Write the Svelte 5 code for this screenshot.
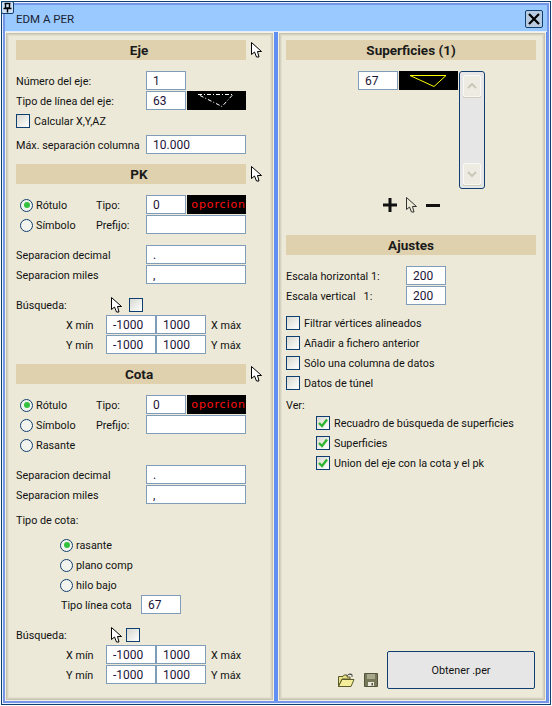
<script>
  const ajustes = [
    "Filtrar vértices alineados",
    "Añadir a fichero anterior",
    "Sólo una columna de datos",
    "Datos de túnel"
  ];
  const ver = [
    "Recuadro de búsqueda de superficies",
    "Superficies",
    "Union del eje con la cota y el pk"
  ];
</script>

{#snippet cursor()}
  <svg class="cursor" width="11" height="16" viewBox="0 0 11 16">
    <path d="M0.5 0.5V12.5L3.5 10L5.5 15H8L6.5 9.5H10.5Z" fill="#fff" stroke="#000" />
  </svg>
{/snippet}

{#snippet radio(label, on)}
  <span class="radio" class:on></span><span class="radioLabel">{label}</span>
{/snippet}

{#snippet check(label, on)}
  <div class="checkRow">
    <span class="check">
      {#if on}
        <svg width="12" height="12" viewBox="0 0 12 12">
          <path d="M2 6L5 9L10 2.5" fill="none" stroke="#2fb52f" stroke-width="2.4" />
        </svg>
      {/if}
    </span>
    <span>{label}</span>
  </div>
{/snippet}

{#snippet strip()}
  <div class="strip red"><span>r oporcion</span></div>
{/snippet}

{#snippet separators()}
  <div class="row"><label class="l130">Separacion decimal</label><input class="w100" readonly value="." /></div>
  <div class="row"><label class="l130">Separacion miles</label><input class="w100" readonly value="," /></div>
{/snippet}

{#snippet limits()}
  <div class="row limit">
    <label class="l40">X mín</label><input class="w50" readonly value="-1000" /><input class="w50" readonly value="1000" /><span class="after">X máx</span>
  </div>
  <div class="row limit">
    <label class="l40">Y mín</label><input class="w50" readonly value="-1000" /><input class="w50" readonly value="1000" /><span class="after">Y máx</span>
  </div>
{/snippet}

{#snippet heading(title)}
  <div class="headWrap">
    <h2 class="offset">{title}</h2>
    {@render cursor()}
  </div>
{/snippet}

<div class="window">
  <div class="frame">
    <span class="pin">
      <svg width="11" height="11" viewBox="0 0 11 11">
        <path d="M2.5 1.5H8.5M3.5 2V6H7.5V2M1.5 6.5H9.5M5.5 7V10.5" fill="none" stroke="#000" stroke-width="1.4" />
      </svg>
    </span>
    <header class="title">
      <span>EDM A PER</span>
      <button class="close" aria-label="Cerrar">
        <svg width="14" height="14" viewBox="0 0 14 14">
          <path d="M2 2L12 12M12 2L2 12" stroke="#000" stroke-width="2.2" />
        </svg>
      </button>
    </header>

    <div class="body">
      <section class="panel left">
        {@render heading("Eje")}
        <div class="row mt11"><label class="l130">Número del eje:</label><input class="w40" readonly value="1" /></div>
        <div class="row">
          <label class="l130">Tipo de línea del eje:</label><input class="w40" readonly value="63" />
          <div class="strip">
            <svg width="59" height="19" viewBox="0 0 59 19">
              <path d="M11 3.5H46L35 15.5Z" fill="none" stroke="#fff" stroke-dasharray="4 2 1 2" />
            </svg>
          </div>
        </div>
        <div class="row">{@render check("Calcular X,Y,AZ", false)}</div>
        <div class="row mt4"><label class="l130">Máx. separación columna</label><input class="w100" readonly value="10.000" /></div>

        <div class="mt9">{@render heading("PK")}</div>
        <div class="row mt11 indent">
          {@render radio("Rótulo", true)}<label class="tipo">Tipo:</label><input class="w40" readonly value="0" />{@render strip()}
        </div>
        <div class="row indent">
          {@render radio("Símbolo", false)}<label class="tipo">Prefijo:</label><input class="w100" readonly value="" />
        </div>
        <div class="mt10">{@render separators()}</div>
        <div class="row search mt10">
          <label class="l95">Búsqueda:</label>{@render cursor()}<span class="check wide"></span>
        </div>
        {@render limits()}

        <div class="mt9">{@render heading("Cota")}</div>
        <div class="row mt11 indent">
          {@render radio("Rótulo", true)}<label class="tipo">Tipo:</label><input class="w40" readonly value="0" />{@render strip()}
        </div>
        <div class="row indent">
          {@render radio("Símbolo", false)}<label class="tipo">Prefijo:</label><input class="w100" readonly value="" />
        </div>
        <div class="row indent">{@render radio("Rasante", false)}</div>
        <div class="mt10">{@render separators()}</div>
        <div class="row mt5">Tipo de cota:</div>
        <div class="row mt5 indent2">{@render radio("rasante", true)}</div>
        <div class="row indent2">{@render radio("plano comp", false)}</div>
        <div class="row indent2">{@render radio("hilo bajo", false)}</div>
        <div class="row tipoCota"><label class="l80">Tipo línea cota</label><input class="w40" readonly value="67" /></div>
        <div class="row search mt10">
          <label class="l95">Búsqueda:</label>{@render cursor()}<span class="check"></span>
        </div>
        {@render limits()}
      </section>

      <section class="panel right">
        <h2>Superficies (1)</h2>
        <div class="list">
          <input class="w40" readonly value="67" />
          <div class="strip">
            <svg width="59" height="19" viewBox="0 0 59 19">
              <path d="M11 4.5H47L35 15.5Z" fill="none" stroke="#ff0" />
            </svg>
          </div>
          <div class="scroll">
            <span class="arrow">
              <svg width="10" height="6" viewBox="0 0 10 6"><path d="M1 5L5 1L9 5" fill="none" stroke="#c9c7b8" stroke-width="2" /></svg>
            </span>
            <span class="arrow">
              <svg width="10" height="6" viewBox="0 0 10 6"><path d="M1 1L5 5L9 1" fill="none" stroke="#c9c7b8" stroke-width="2" /></svg>
            </span>
          </div>
        </div>
        <div class="tools">
          <svg width="14" height="14" viewBox="0 0 14 14"><path d="M7 0V14M0 7H14" stroke="#111" stroke-width="3" /></svg>
          <svg width="11" height="16" viewBox="0 0 11 16">
            <path d="M0.5 0.5V12.5L3.5 10L5.5 15H8L6.5 9.5H10.5Z" fill="#ece9d8" stroke="#333" />
          </svg>
          <svg width="14" height="3" viewBox="0 0 14 3"><path d="M0 1.5H14" stroke="#111" stroke-width="3" /></svg>
        </div>

        <h2 class="mt21">Ajustes</h2>
        <div class="row mt11"><label class="l120">Escala horizontal 1:</label><input class="w40" readonly value="200" /></div>
        <div class="row"><label class="l120">Escala vertical &nbsp;&nbsp;1:</label><input class="w40" readonly value="200" /></div>
        <div class="mt7">
          {#each ajustes as item}
            <div class="row">{@render check(item, false)}</div>
          {/each}
        </div>
        <div class="verLabel">Ver:</div>
        <div class="verList">
          {#each ver as item}
            <div class="row">{@render check(item, true)}</div>
          {/each}
        </div>

        <div class="footer">
          <svg class="fileIcon" width="17" height="14" viewBox="0 0 17 14">
            <path d="M0.5 3.5H5L6 2H9V4H12V6H4L0.5 13.5Z" fill="#e9e28a" stroke="#5b5b2a" />
            <path d="M4 6.5H16L13 13.5H0.5Z" fill="#f4ee9c" stroke="#5b5b2a" />
            <path d="M9 3C10 1 12 0.5 14 1.5M14 1.5V4M14 1.5H11.5" fill="none" stroke="#4a4a4a" />
          </svg>
          <svg class="fileIcon save" width="14" height="14" viewBox="0 0 14 14">
            <path d="M0.5 0.5H13.5V13.5H0.5Z" fill="#77775a" stroke="#55553c" />
            <path d="M3 1H11V6H3Z" fill="#a8a88c" />
            <path d="M4 9H10V13H4Z" fill="#e8e8dc" />
            <path d="M7.5 10H9V12.5H7.5Z" fill="#55553c" />
          </svg>
          <button class="go">Obtener .per</button>
        </div>
      </section>
    </div>
  </div>
</div>

<style>
  :global(body) {
    background: #fff;
  }

  .window {
    box-sizing: border-box;
    width: 550px;
    height: 704px;
    margin: 1px;
    border: 1px solid #0f3f70;
    padding: 1px;
    background: #e9f0fb;
    font-family: Roboto, "Liberation Sans", sans-serif;
    font-size: 10.8px;
    color: #111;
  }

  .frame {
    position: relative;
    box-sizing: border-box;
    height: 100%;
    border: 2px solid #7595e6;
    background: #99c9ff;
    display: flex;
    flex-direction: column;
  }

  .pin {
    position: absolute;
    left: -4px;
    top: -4px;
    width: 11px;
    height: 11px;
    border: 1px solid #0f3f70;
    border-radius: 2px;
    background: #cfe0f5;
    display: flex;
    align-items: center;
    justify-content: center;
  }

  .title {
    height: 25px;
    flex: none;
    display: flex;
    align-items: center;
    justify-content: space-between;
    padding: 1px 4px 0 11px;
    font-size: 11.5px;
    color: #1a2333;
  }

  .close {
    box-sizing: border-box;
    width: 18px;
    height: 18px;
    margin: 0;
    padding: 0;
    border: 1px solid #0f3f70;
    border-radius: 2px;
    background: #b9cbe0;
    display: flex;
    align-items: center;
    justify-content: center;
  }

  .body {
    flex: 1;
    display: flex;
    gap: 4px;
    min-height: 0;
    background: #5f8ff0;
    border-top: 1px solid #e4eefb;
  }

  .panel {
    box-sizing: border-box;
    background: #ece9d8;
    border: 1px solid #f4f2e8;
    box-shadow: inset 0 0 0 1px #c7c2ae, inset 0 0 0 2px #d6d2c0, inset 0 0 0 3px #e3dfcf;
    padding-top: 7px;
  }

  .left {
    width: 269px;
    padding-left: 10px;
    padding-right: 6px;
  }

  .right {
    width: 268px;
    padding-left: 7px;
    padding-right: 9px;
    display: flex;
    flex-direction: column;
  }

  h2 {
    height: 20px;
    margin: 0;
    background: #dfd1ae;
    font-size: 13.5px;
    font-weight: bold;
    line-height: 20px;
    text-align: center;
    color: #1a1a1a;
  }

  h2.offset {
    width: 230px;
    padding-left: 16px;
    box-sizing: border-box;
  }

  .headWrap {
    display: flex;
    align-items: flex-start;
    gap: 5px;
  }

  .cursor {
    flex: none;
    margin-top: 2px;
  }

  .row {
    height: 20px;
    display: flex;
    align-items: center;
    white-space: nowrap;
  }

  input {
    box-sizing: border-box;
    width: 40px;
    height: 19px;
    margin: 0;
    align-self: flex-start;
    border: 1px solid #7f9db9;
    background: #fff;
    padding: 0 0 0 6px;
    font: inherit;
    font-size: 12px;
    color: #1c1438;
    outline: none;
    flex: none;
  }

  .w40 { width: 40px; }
  .w50 { width: 50px; }
  .w100 { width: 100px; }
  .l40 { width: 40px; }
  .l80 { width: 80px; }
  .l95 { width: 95px; }
  .l120 { width: 120px; }
  .l130 { width: 130px; }

  .mt4 { margin-top: 4px; }
  .mt5 { margin-top: 5px; }
  .mt7 { margin-top: 7px; }
  .mt9 { margin-top: 9px; }
  .mt10 { margin-top: 10px; }
  .mt11 { margin-top: 11px; }
  .mt21 { margin-top: 21px; }

  .strip {
    width: 59px;
    height: 19px;
    margin-left: 1px;
    align-self: flex-start;
    background: #000;
    overflow: hidden;
    flex: none;
  }

  .strip svg {
    display: block;
  }

  .strip.red {
    display: flex;
    justify-content: flex-end;
    align-items: center;
    color: #ff1010;
    font-family: "DejaVu Sans", sans-serif;
    font-size: 11px;
    letter-spacing: 0.9px;
  }

  .indent {
    padding-left: 4px;
  }

  .indent2 {
    padding-left: 44px;
  }

  .radio {
    box-sizing: border-box;
    width: 13px;
    height: 13px;
    border: 1.5px solid #0f3f70;
    border-radius: 50%;
    background: #f4f4ee;
    flex: none;
    display: flex;
    align-items: center;
    justify-content: center;
  }

  .radio.on::after {
    content: "";
    width: 6px;
    height: 6px;
    border-radius: 50%;
    background: #35c040;
  }

  .radioLabel {
    margin-left: 3px;
    min-width: 60px;
  }

  .tipo {
    width: 50px;
    flex: none;
  }

  .checkRow {
    display: flex;
    align-items: center;
    gap: 4px;
  }

  .check {
    box-sizing: border-box;
    width: 14px;
    height: 14px;
    border: 1px solid #0f3f70;
    background: linear-gradient(135deg, #d8d8d0, #fff);
    flex: none;
    display: flex;
    align-items: center;
    justify-content: center;
  }

  .search .cursor {
    margin-top: 0;
  }

  .search .check {
    margin-left: 4px;
  }

  .search .wide {
    margin-left: 7px;
  }

  .limit {
    padding-left: 50px;
  }

  .after {
    margin-left: 5px;
  }

  .tipoCota {
    padding-left: 45px;
  }

  .list {
    display: flex;
    align-items: flex-start;
    margin-top: 11px;
    padding-left: 72px;
  }

  .scroll {
    box-sizing: border-box;
    width: 26px;
    height: 118px;
    margin-left: 1px;
    border: 1px solid #0f3f70;
    border-radius: 3px;
    background: #e6e6e6;
    padding: 3px;
    display: flex;
    flex-direction: column;
    justify-content: space-between;
    flex: none;
  }

  .arrow {
    height: 20px;
    border: 1px solid #f8f8f4;
    border-radius: 2px;
    background: #eeece2;
    box-shadow: 0 1px 0 #d0cdbd;
    display: flex;
    align-items: center;
    justify-content: center;
  }

  .tools {
    display: flex;
    align-items: center;
    justify-content: center;
    gap: 9px;
    height: 18px;
    margin-top: 7px;
    width: 250px;
  }

  .verLabel {
    height: 14px;
    line-height: 14px;
    margin-top: 6px;
  }

  .verList {
    padding-left: 30px;
  }

  .footer {
    margin-top: auto;
    margin-bottom: 11px;
    display: flex;
    align-items: flex-end;
    padding-left: 52px;
  }

  .fileIcon {
    margin-bottom: 2px;
    flex: none;
  }

  .save {
    margin-left: 9px;
  }

  .go {
    box-sizing: border-box;
    width: 148px;
    height: 38px;
    margin-left: 9px;
    border: 1px solid #0f3f70;
    border-radius: 2px;
    background: #e6e6e6;
    font: inherit;
    color: #111;
  }
</style>
